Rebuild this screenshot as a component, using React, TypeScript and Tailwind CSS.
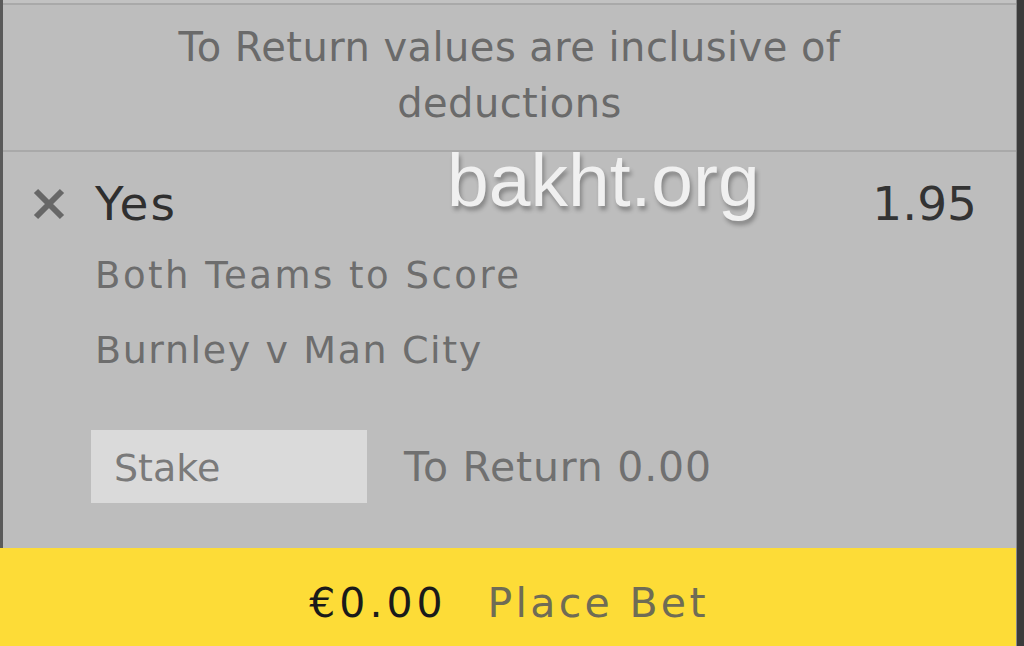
import React from "react";

const dv = { fontFamily: '"DejaVu Sans", Verdana, sans-serif' } as const;

export default function App() {
  return (
    <div className="relative flex w-[1024px] h-[646px] overflow-hidden bg-[#bdbdbd]" style={dv}>
      <div className="flex flex-1 flex-col">
        <div className="flex flex-1 flex-col border-l-[3px] border-[#5a5a5a] bg-[#bdbdbd]">
          <div className="h-[3px] bg-[#c2c2c2]" />
          <div className="border-t-2 border-b-2 border-[#a9a9a9] pt-[14px] pb-[19px] text-center text-[40px] leading-[56px] tracking-[0.45px] text-[#6a6a6a]">
            <div>To Return values are inclusive of</div>
            <div>deductions</div>
          </div>
          <div className="pt-[24px]">
            <div className="flex h-[56px] items-center justify-between pr-[39px]">
              <div className="flex items-center">
                <div className="ml-[29px] w-[63px]">
                  <svg width="34" height="34" viewBox="0 0 34 34">
                    <path d="M4 4 L30 30 M30 4 L4 30" stroke="#676767" strokeWidth="6" fill="none" />
                  </svg>
                </div>
                <span className="text-[47px] leading-[56px] tracking-[2px] text-[#2f2f2f]">Yes</span>
              </div>
              <span className="text-[47px] leading-[56px] text-[#333333]">1.95</span>
            </div>
            <div className="mt-[7px] pl-[92px] text-[37px] leading-[74px] tracking-[2.5px] text-[#6d6d6d]">
              Both Teams to Score
            </div>
            <div className="pl-[92px] text-[38px] leading-[74px] tracking-[1.6px] text-[#6d6d6d]">
              Burnley v Man City
            </div>
            <div className="mt-[43px] flex items-center pl-[88px]">
              <div className="flex h-[73px] w-[276px] items-center bg-[#dadada] pl-[23px] pt-[3px] text-[38px] text-[#7a7a7a]">
                Stake
              </div>
              <span className="ml-[37px] pt-[3px] text-[41px] tracking-[0.8px] text-[#707070]">To Return 0.00</span>
            </div>
          </div>
        </div>
        <div className="flex h-[98px] items-start justify-center bg-[#fddc37] pt-[31px] pl-[2px]">
          <span className="text-[41px] leading-[48px] tracking-[4px] text-[#1a1a1a]">€0.00</span>
          <span className="ml-[41px] text-[41px] leading-[48px] tracking-[3.3px] text-[#6f6c55]">Place Bet</span>
        </div>
      </div>
      <div className="w-[8px] border-l border-[#8a8a8a] bg-[#3b3b3b]" />
      <div
        className="absolute left-[447px] top-[143px] text-[75px] leading-[75px] text-[#f0f0f0]"
        style={{ fontFamily: '"Liberation Sans", Arial, sans-serif', textShadow: "2px 4px 4px rgba(0,0,0,0.3)" }}
      >
        bakht.org
      </div>
    </div>
  );
}
